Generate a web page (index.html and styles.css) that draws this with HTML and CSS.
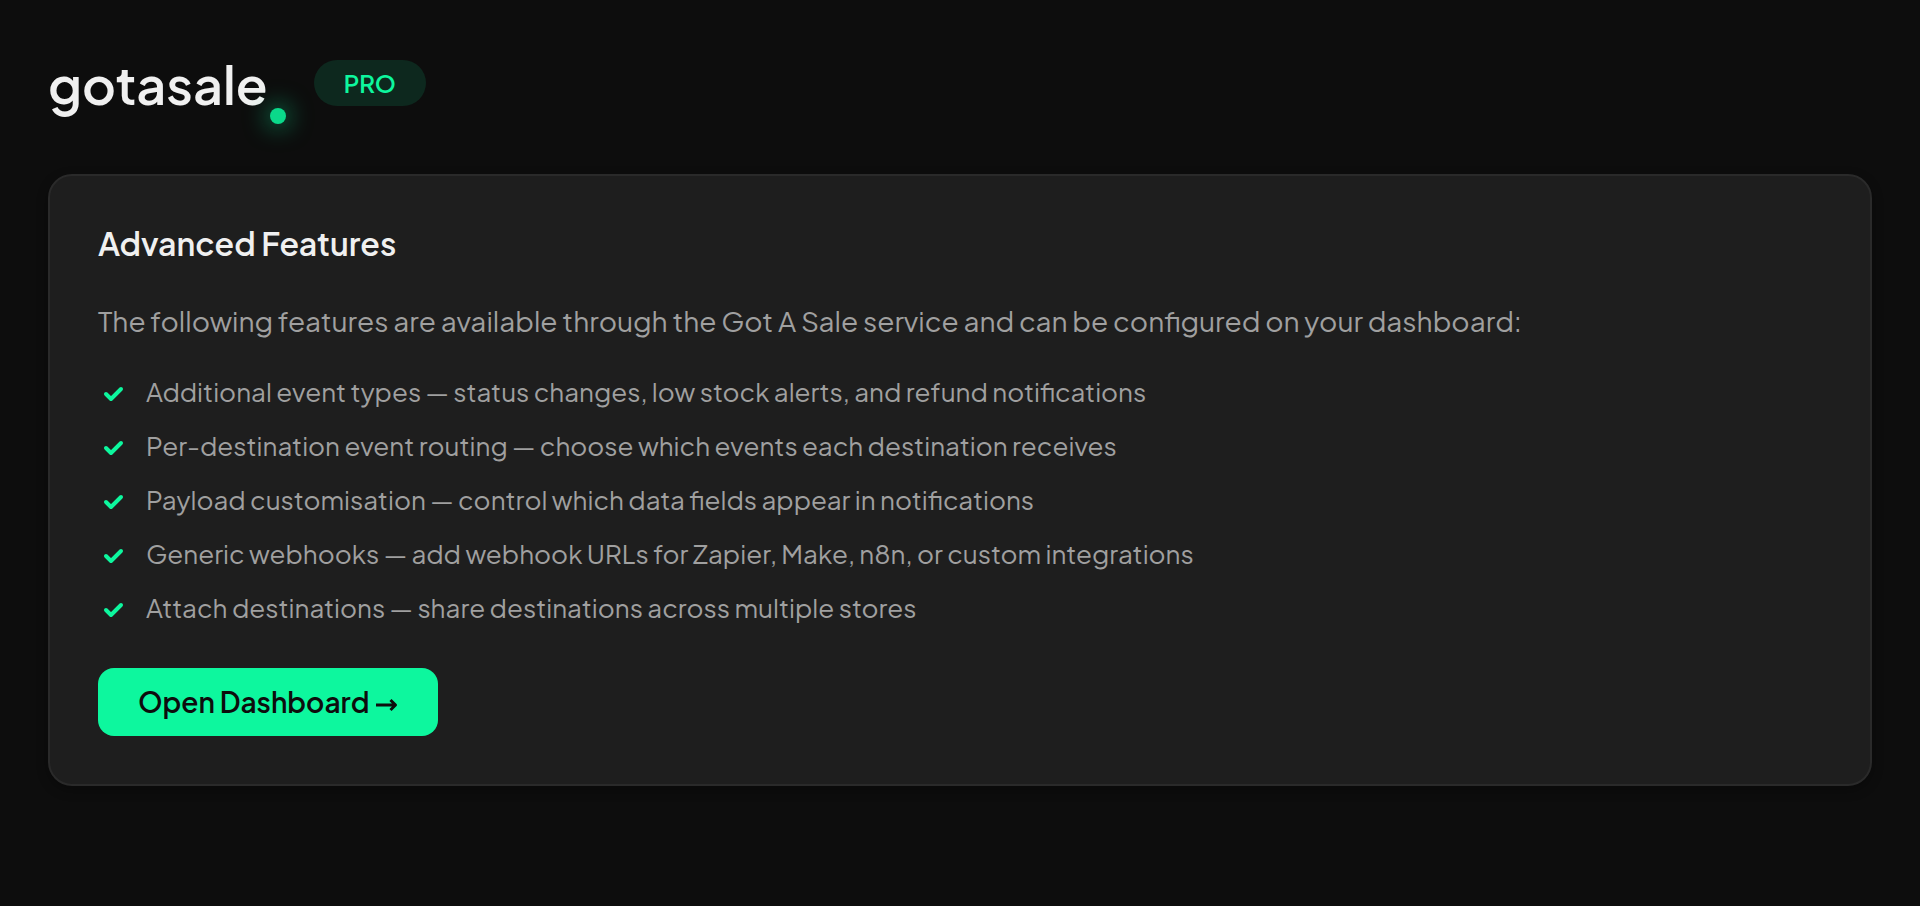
FILE: index.html
```html
<!DOCTYPE html>
<html lang="en">
<head>
    <meta charset="UTF-8">
    <meta name="viewport" content="width=device-width, initial-scale=1.0">
    <title>Got A Sale</title>
    <link rel="stylesheet" href="styles.css">
</head>
<body>
    <header class="header">
        <div class="logo">gotasale<span class="logo-dot"></span></div>
        <span class="badge">PRO</span>
    </header>
    <main class="card">
        <h2>Advanced Features</h2>
        <p>The following features are available through the Got A Sale service and can be configured on your dashboard:</p>
        <ul class="features">
            <li><svg class="check" viewBox="0 0 32 32"><path d="M8 18l5 5 10-10"/></svg>Additional event types — status changes, low stock alerts, and refund notifications</li>
            <li><svg class="check" viewBox="0 0 32 32"><path d="M8 18l5 5 10-10"/></svg>Per-destination event routing — choose which events each destination receives</li>
            <li><svg class="check" viewBox="0 0 32 32"><path d="M8 18l5 5 10-10"/></svg>Payload customisation — control which data fields appear in notifications</li>
            <li><svg class="check" viewBox="0 0 32 32"><path d="M8 18l5 5 10-10"/></svg>Generic webhooks — add webhook URLs for Zapier, Make, n8n, or custom integrations</li>
            <li><svg class="check" viewBox="0 0 32 32"><path d="M8 18l5 5 10-10"/></svg>Attach destinations — share destinations across multiple stores</li>
        </ul>
        <a class="button" href="#dashboard">Open Dashboard <svg class="arrow" viewBox="0 0 22 22"><path d="M0 14H19M14.500 9l5 5-5 5"/></svg></a>
    </main>
</body>
</html>
```
FILE: styles.css
```css
* {
    box-sizing: border-box;
}
body {
    margin: 0;
    padding: 48px;
    font-family: "Plus Jakarta Sans", Inter, sans-serif;
    background: #0d0d0d;
    color: #a0a0a0;
}
.header {
    display: flex;
    align-items: flex-start;
    gap: 28px;
    margin-bottom: 50px;
}
.logo {
    display: flex;
    align-items: flex-start;
    color: #f0f0f0;
    font-size: 52px;
    line-height: 72px;
    font-weight: 600;
}
.logo-dot {
    width: 16px;
    height: 16px;
    margin: 60px 0 0 2px;
    border-radius: 50%;
    background: #0bd98a;
    box-shadow: 0 0 24px 2px rgba(13, 247, 158, 0.6);
}
.badge {
    margin-top: 12px;
    padding: 0 30px;
    border-radius: 24px;
    background: #0d281e;
    color: #0df79e;
    font-size: 24px;
    line-height: 46px;
    font-weight: 600;
}
.card {
    padding: 48px;
    border: 2px solid #2a2a2a;
    border-radius: 24px;
    background: #1e1e1e;
    box-shadow: 0 4px 12px rgba(0, 0, 0, 0.3);
}
h2 {
    margin: 0 0 36px;
    color: #f0f0f0;
    font-size: 32px;
    line-height: 38px;
    font-weight: 600;
}
p {
    margin: 0 0 26px;
    font-size: 28px;
    line-height: 46px;
}
.features {
    display: grid;
    gap: 10px;
    margin: 0 0 38px;
    padding: 0;
    list-style: none;
    font-size: 26px;
    line-height: 44px;
}
.features li {
    display: flex;
    align-items: center;
    gap: 16px;
}
.check {
    width: 32px;
    height: 32px;
    fill: none;
    stroke: #0df79e;
    stroke-width: 4;
    stroke-linecap: round;
    stroke-linejoin: round;
}
.button {
    display: inline-flex;
    align-items: center;
    gap: 7px;
    padding: 0 40px;
    border-radius: 16px;
    background: #0df79e;
    color: #0d0d0d;
    font-size: 28px;
    line-height: 68px;
    font-weight: 600;
    text-decoration: none;
}
.arrow {
    width: 22px;
    height: 22px;
    fill: none;
    stroke: currentColor;
    stroke-width: 3;
    stroke-linejoin: round;
}
```
